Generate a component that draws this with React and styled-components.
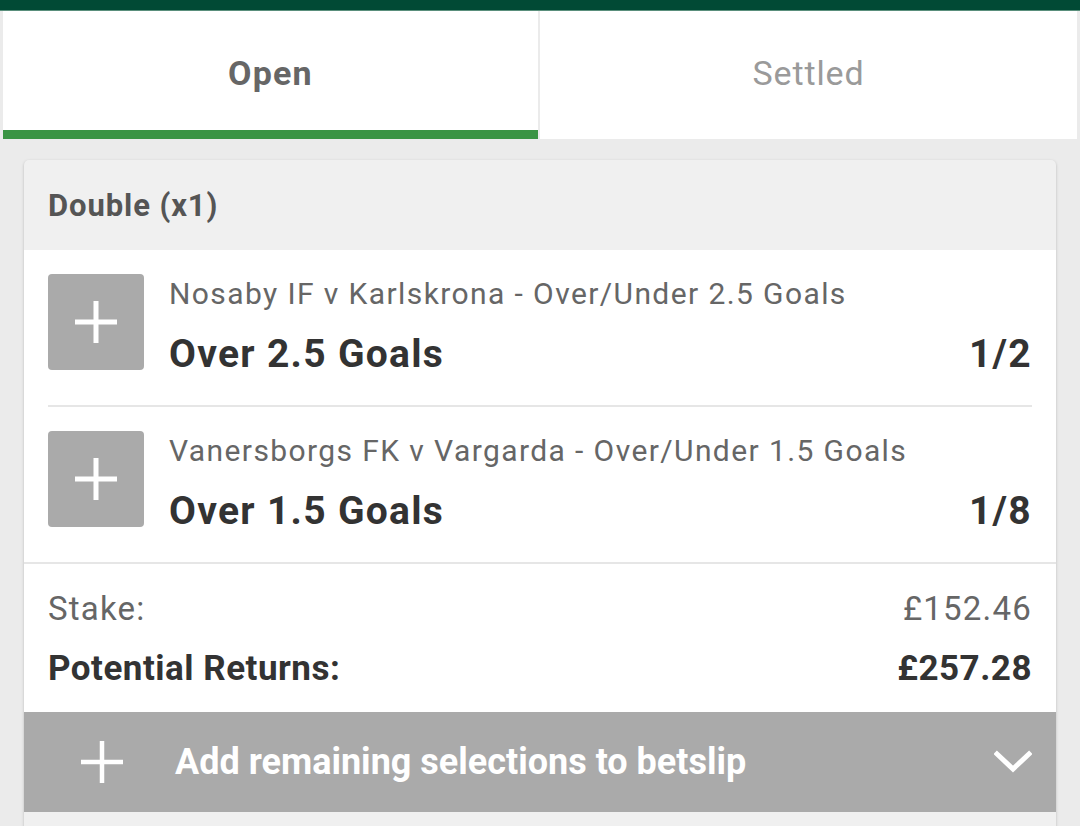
import styled, {createGlobalStyle} from 'styled-components'

const GlobalStyle = createGlobalStyle`
  * { box-sizing: border-box; margin: 0; padding: 0; }
  body {
    margin: 0;
    background: #ebebeb;
    font-family: Roboto, "Liberation Sans", sans-serif;
  }
`

const Page = styled.div`
  width: 1080px;
  height: 826px;
  overflow: hidden;
  background: #ebebeb;
`
const TopBar = styled.div`
  height: 11px;
  background: #014a35;
  border-bottom: 1px solid #5a8f7c;
`
const Tabs = styled.div`
  display: grid;
  grid-template-columns: 535px 537px;
  gap: 2px;
  padding: 0 3px;
`
const Tab = styled.div`
  height: 128px;
  background: #fff;
  display: flex;
  align-items: center;
  justify-content: center;
  font-size: 34px;
  letter-spacing: ${p => (p.$active ? '1.2px' : '0.9px')};
  font-weight: ${p => (p.$active ? 700 : 400)};
  color: ${p => (p.$active ? '#666' : '#9a9a9a')};
  border-bottom: 9px solid ${p => (p.$active ? '#3a9444' : '#fff')};
  padding-top: 4px;
`
const Card = styled.div`
  margin: 21px 24px 0;
  background: #f0f0f0;
  border-radius: 5px 5px 0 0;
  box-shadow: 0 1px 3px rgba(0, 0, 0, 0.22);
  overflow: hidden;
`
const CardHeader = styled.div`
  height: 90px;
  display: flex;
  align-items: center;
  padding: 0 24px;
  font-size: 31px;
  letter-spacing: 0.9px;
  font-weight: 700;
  color: #555;
`
const Legs = styled.div`
  background: #fff;
  padding: 0 24px;
  border-bottom: 2px solid #e6e6e6;
`
const Leg = styled.div`
  display: flex;
  align-items: flex-start;
  gap: 25px;
  padding: 24px 0 29px;
  border-top: ${p => (p.$first ? 'none' : '2px solid #e6e6e6')};
`
const AddBox = styled.div`
  width: 96px;
  height: 96px;
  flex-shrink: 0;
  border-radius: 4px;
  background: #aaaaaa;
  display: flex;
  align-items: center;
  justify-content: center;
`
const LegInfo = styled.div`
  flex: 1;
  display: flex;
  flex-direction: column;
  gap: 19px;
  margin-top: 1px;
`
const Market = styled.div`
  font-size: 30px;
  letter-spacing: 1.4px;
  color: #666;
  line-height: 38px;
  white-space: nowrap;
`
const SelectionRow = styled.div`
  display: flex;
  justify-content: space-between;
  align-items: center;
  font-size: 39px;
  letter-spacing: 1.3px;
  font-weight: 700;
  color: #333;
  line-height: 44px;
`
const Totals = styled.div`
  background: #fff;
  padding: 22px 24px 20px;
  display: flex;
  flex-direction: column;
  gap: 14px;
`
const TotalRow = styled.div`
  display: flex;
  justify-content: space-between;
  line-height: 46px;
  font-size: ${p => (p.$bold ? '35px' : '33px')};
  letter-spacing: ${p => (p.$bold ? '0.5px' : '1.2px')};
  font-weight: ${p => (p.$bold ? 700 : 400)};
  color: ${p => (p.$bold ? '#333' : '#666')};
`
const AddAll = styled.div`
  height: 100px;
  background: #aaaaaa;
  display: flex;
  align-items: center;
  padding: 0 24px 0 57px;
  color: #fff;
  font-size: 36px;
  font-weight: 700;
`
const AddAllLabel = styled.span`
  flex: 1;
  margin-left: 52px;
`
const CardFoot = styled.div`
  height: 30px;
`

const Plus = ({size = 42, stroke = 5}) => (
  <svg width={size} height={size} viewBox="0 0 42 42">
    <rect x={21 - stroke / 2} y="0" width={stroke} height="42" fill="#fff" />
    <rect x="0" y={21 - stroke / 2} width="42" height={stroke} fill="#fff" />
  </svg>
)

const Chevron = () => (
  <svg width="38" height="24" viewBox="0 0 38 24">
    <path d="M3 4 L19 19 L35 4" fill="none" stroke="#fff" strokeWidth="5" strokeLinecap="square" />
  </svg>
)

const legs = [
  {market: 'Nosaby IF v Karlskrona - Over/Under 2.5 Goals', pick: 'Over 2.5 Goals', odds: '1/2'},
  {market: 'Vanersborgs FK v Vargarda - Over/Under 1.5 Goals', pick: 'Over 1.5 Goals', odds: '1/8'},
]

export default function App() {
  return (
    <Page>
      <GlobalStyle />
      <TopBar />
      <Tabs>
        <Tab $active>Open</Tab>
        <Tab>Settled</Tab>
      </Tabs>
      <Card>
        <CardHeader>Double (x1)</CardHeader>
        <Legs>
          {legs.map((l, i) => (
            <Leg key={l.market} $first={i === 0}>
              <AddBox><Plus /></AddBox>
              <LegInfo>
                <Market>{l.market}</Market>
                <SelectionRow>
                  <span>{l.pick}</span>
                  <span>{l.odds}</span>
                </SelectionRow>
              </LegInfo>
            </Leg>
          ))}
        </Legs>
        <Totals>
          <TotalRow><span>Stake:</span><span>£152.46</span></TotalRow>
          <TotalRow $bold><span>Potential Returns:</span><span>£257.28</span></TotalRow>
        </Totals>
        <AddAll>
          <Plus stroke={4.5} />
          <AddAllLabel>Add remaining selections to betslip</AddAllLabel>
          <Chevron />
        </AddAll>
        <CardFoot />
      </Card>
    </Page>
  )
}
